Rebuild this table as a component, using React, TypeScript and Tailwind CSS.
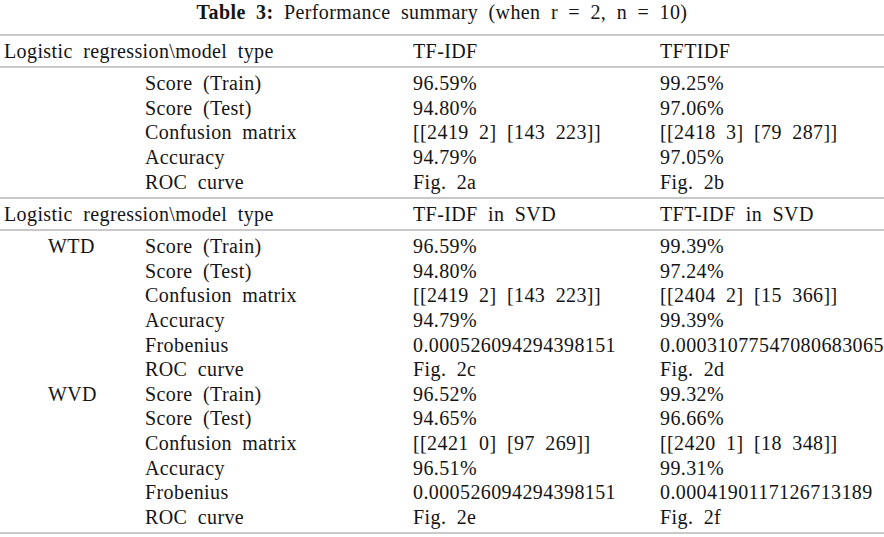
import React from 'react';

type Row = { group?: string; label: string; a: string; b: string };

const part1: Row[] = [
  { label: 'Score (Train)', a: '96.59%', b: '99.25%' },
  { label: 'Score (Test)', a: '94.80%', b: '97.06%' },
  { label: 'Confusion matrix', a: '[[2419 2] [143 223]]', b: '[[2418 3] [79 287]]' },
  { label: 'Accuracy', a: '94.79%', b: '97.05%' },
  { label: 'ROC curve', a: 'Fig. 2a', b: 'Fig. 2b' },
];

const part2: Row[] = [
  { group: 'WTD', label: 'Score (Train)', a: '96.59%', b: '99.39%' },
  { label: 'Score (Test)', a: '94.80%', b: '97.24%' },
  { label: 'Confusion matrix', a: '[[2419 2] [143 223]]', b: '[[2404 2] [15 366]]' },
  { label: 'Accuracy', a: '94.79%', b: '99.39%' },
  { label: 'Frobenius', a: '0.000526094294398151', b: '0.00031077547080683065' },
  { label: 'ROC curve', a: 'Fig. 2c', b: 'Fig. 2d' },
  { group: 'WVD', label: 'Score (Train)', a: '96.52%', b: '99.32%' },
  { label: 'Score (Test)', a: '94.65%', b: '96.66%' },
  { label: 'Confusion matrix', a: '[[2421 0] [97 269]]', b: '[[2420 1] [18 348]]' },
  { label: 'Accuracy', a: '96.51%', b: '99.31%' },
  { label: 'Frobenius', a: '0.000526094294398151', b: '0.0004190117126713189' },
  { label: 'ROC curve', a: 'Fig. 2e', b: 'Fig. 2f' },
];

const sections = [
  { head: ['TF-IDF', 'TFTIDF'], rows: part1 },
  { head: ['TF-IDF in SVD', 'TFT-IDF in SVD'], rows: part2 },
];

// columns: spacer | group (WTD/WVD) | metric | first model | second model
const cols = 'grid grid-cols-[44px_97px_268px_247px_1fr] pl-[4px] whitespace-nowrap';

export default function App() {
  return (
    <div
      className="w-[884px] h-[537px] bg-white text-[#141414] text-[20px] leading-none tracking-[0.4px] [word-spacing:5px] overflow-hidden"
      style={{ fontFamily: '"Liberation Serif", "Times New Roman", serif' }}
    >
      <div className="h-[34px] pt-[2px] text-center">
        <span className="font-bold">Table 3:</span> Performance summary (when r = 2, n = 10)
      </div>
      <div className="border-t-2 border-[#c9c9c9]">
        {sections.map((s, k) => (
          <div key={k}>
            <div className={`${cols} h-[32px] items-center border-b-2 border-[#c9c9c9]`}>
              <div className="col-span-3">Logistic regression\model type</div>
              <div>{s.head[0]}</div>
              <div>{s.head[1]}</div>
            </div>
            <div className="pt-[3px] pb-[3px] border-b-2 border-[#c9c9c9]">
              {s.rows.map((r, i) => (
                <div key={i} className={`${cols} h-[24.6px] items-center`}>
                  <div />
                  <div>{r.group ?? ''}</div>
                  <div>{r.label}</div>
                  <div>{r.a}</div>
                  <div>{r.b}</div>
                </div>
              ))}
            </div>
          </div>
        ))}
      </div>
    </div>
  );
}
